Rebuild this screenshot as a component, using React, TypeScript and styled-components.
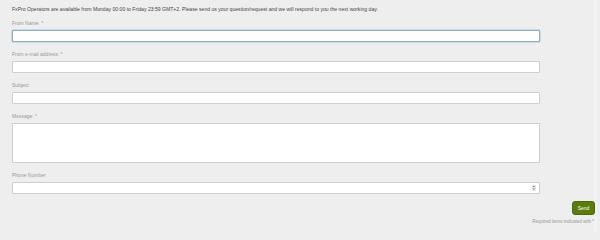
import styled, { createGlobalStyle } from "styled-components";

const GlobalStyle = createGlobalStyle`
  html, body {
    margin: 0;
    padding: 0;
    background: #eeeeee;
  }
  body {
    font-family: "Liberation Sans", Arial, sans-serif;
  }
`;

const Page = styled.div`
  width: 597px;
  height: 231px;
  box-sizing: border-box;
  padding: 6px 0 0 12px;
  background: #eeeeee;
  border-right: 3px solid #f3f3f3;
`;

const Intro = styled.p`
  margin: 0 0 8px;
  font-size: 5.1px;
  line-height: 6px;
  color: #444;
  white-space: nowrap;
`;

const Form = styled.form`
  width: 528px;
`;

const Field = styled.div<{ $gap?: number }>`
  margin-bottom: ${(p) => p.$gap ?? 9}px;
`;

const Label = styled.label`
  display: block;
  height: 6px;
  margin-bottom: 4px;
  font-size: 5px;
  line-height: 6px;
  color: #999;
`;

const Input = styled.input<{ $focused?: boolean }>`
  display: block;
  width: 100%;
  height: 12px;
  box-sizing: border-box;
  margin: 0;
  padding: 0 3px;
  background: #fff;
  border: 1px solid ${(p) => (p.$focused ? "#8fb0c4" : "#c6d0d5")};
  border-radius: 1px;
  box-shadow: ${(p) => (p.$focused ? "0 0 0 0.5px #a9c3d2" : "none")};
  font-size: 5px;
  outline: none;
`;

const PhoneBox = styled.div`
  display: flex;
  align-items: center;
  justify-content: flex-end;
  height: 12px;
  box-sizing: border-box;
  padding-right: 3px;
  background: #fff;
  border: 1px solid #c6d0d5;
  border-radius: 1px;
`;

const Spinner = styled.span`
  display: flex;
  flex-direction: column;
  justify-content: center;
  width: 4px;
  height: 6px;
  background: #e4e4e4;
  font-size: 3px;
  line-height: 3px;
  color: #555;
  text-align: center;
`;

const TextArea = styled.textarea`
  display: block;
  width: 100%;
  height: 40px;
  box-sizing: border-box;
  margin: 0;
  padding: 2px 3px;
  resize: none;
  background: #fff;
  border: 1px solid #c6d0d5;
  border-radius: 1px;
  font-size: 5px;
  outline: none;
`;

const Footer = styled.div`
  display: flex;
  flex-direction: column;
  align-items: flex-end;
  width: 583px;
  margin-top: 7px;
`;

const SendButton = styled.button`
  width: 23px;
  height: 14px;
  padding: 0;
  border: 1px solid #4d6a08;
  border-radius: 3px;
  background: #5b7b0e;
  color: #fff;
  font-family: "Liberation Sans", Arial, sans-serif;
  font-size: 5px;
  cursor: pointer;
`;

const Required = styled.span`
  margin: 4px 1px 0 0;
  font-size: 4.5px;
  line-height: 6px;
  color: #999;
`;

export default function App() {
  return (
    <>
      <GlobalStyle />
      <Page>
        <Intro>
          FxPro Operators are available from Monday 00:00 to Friday 23:59
          GMT+2. Please send us your question/request and we will respond to
          you the next working day.
        </Intro>
        <Form onSubmit={(e) => e.preventDefault()}>
          <Field>
            <Label>From Name: *</Label>
            <Input $focused />
          </Field>
          <Field>
            <Label>From e-mail address: *</Label>
            <Input />
          </Field>
          <Field>
            <Label>Subject</Label>
            <Input />
          </Field>
          <Field>
            <Label>Message: *</Label>
            <TextArea />
          </Field>
          <Field $gap={0}>
            <Label>Phone Number</Label>
            <PhoneBox>
              <Spinner>
                <span>▴</span>
                <span>▾</span>
              </Spinner>
            </PhoneBox>
          </Field>
        </Form>
        <Footer>
          <SendButton type="button">Send</SendButton>
          <Required>Required items indicated with *</Required>
        </Footer>
      </Page>
    </>
  );
}
